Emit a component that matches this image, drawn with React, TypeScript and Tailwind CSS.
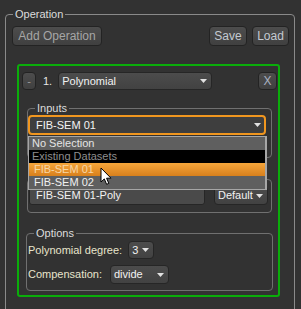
import React from "react";
import clsx from "clsx";

const font = { fontFamily: '"Liberation Sans", Arial, sans-serif' };

function GroupBox({
  title,
  className,
  children,
}: {
  title?: string;
  className?: string;
  children?: React.ReactNode;
}) {
  return (
    <fieldset className={clsx("rounded-[4px] border", className)}>
      <legend className="ml-[7px] h-[13px] px-[2px] text-[11px] leading-[13px] text-[#dcdcdc]">
        {title}
      </legend>
      {children}
    </fieldset>
  );
}

function Arrow() {
  return (
    <svg width="7" height="4" viewBox="0 0 7 4" className="shrink-0">
      <path d="M0 0 L7 0 L3.5 4 Z" fill="#e2e2e2" />
    </svg>
  );
}

function Combo({
  text,
  className,
}: {
  text: string;
  className?: string;
}) {
  return (
    <div
      className={clsx(
        "flex items-center justify-between rounded-[4px] border border-[#262626] bg-gradient-to-b from-[#4c4c4c] to-[#424242] pl-[3px] pr-[4px] text-[11px] text-[#f2f2f2]",
        className
      )}
    >
      <span>{text}</span>
      <Arrow />
    </div>
  );
}

function Button({
  text,
  className,
}: {
  text: string;
  className?: string;
}) {
  return (
    <div
      className={clsx(
        "flex items-center justify-center rounded-[4px] border border-[#232323] bg-gradient-to-b from-[#4d4d4d] to-[#404040]",
        className
      )}
    >
      {text}
    </div>
  );
}

export default function App() {
  return (
    <div
      className="relative h-[309px] w-[301px] overflow-hidden bg-[#323232] pt-[8px]"
      style={font}
    >
      {/* Operation */}
      <GroupBox title="Operation" className="ml-[5px] w-[290px] border-[#8a8a8a]">
        <div className="pb-[30px] pl-[6px] pr-[5px]">
          <div className="mt-[5px] flex items-center justify-between">
            <Button
              text="Add Operation"
              className="h-[20px] w-[90px] text-[12px] text-[#a6a6a6]"
            />
            <div className="flex gap-[5px]">
              <Button text="Save" className="h-[20px] w-[38px] text-[12px] text-[#c4cad2]" />
              <Button text="Load" className="h-[20px] w-[37px] text-[12px] text-[#c4cad2]" />
            </div>
          </div>

          {/* Operation 1 */}
          <div className="relative ml-[5px] mt-[18px] w-[263px] rounded-[3px] border-2 border-[#0aad0a] pb-[4px]">
            <div className="flex items-center pl-[3px] pr-[1px] pt-[6px]">
              <Button text="-" className="h-[18px] w-[14px] text-[11px] text-[#9a9a9a]" />
              <span className="ml-[7px] text-[11px] text-[#e6e6e6]">1.</span>
              <Combo text="Polynomial" className="ml-[6px] h-[18px] w-[154px]" />
              <Button
                text="X"
                className="ml-auto h-[18px] w-[19px] text-[12px] text-[#aab2c0]"
              />
            </div>

            <GroupBox title="Inputs" className="ml-[8px] mt-[12px] w-[245px] border-[#707070]">
              <div className="flex h-[20px] w-[238px] items-center justify-between rounded-[4px] border-2 border-[#f0961f] bg-[#3e3e3e] pl-[6px] pr-[3px] text-[11px] text-[#f4f4f4]">
                <span>FIB-SEM 01</span>
                <Arrow />
              </div>
              <div className="h-[22px]" />
            </GroupBox>

            {/* outputs box: its title sits under the open list */}
            <GroupBox className="ml-[8px] mt-[15px] w-[245px] border-[#707070]">
              <div className="flex items-center pb-[7px] pl-[1px]">
                <div className="flex h-[19px] w-[176px] items-center rounded-[3px] border border-[#262626] bg-[#4a4a4a] pl-[6px] text-[11px] text-[#f2f2f2]">
                  FIB-SEM 01-Poly
                </div>
                <Combo text="Default" className="ml-[9px] h-[19px] w-[54px] text-[#f0ecd8]" />
              </div>
            </GroupBox>

            <GroupBox title="Options" className="ml-[7px] mt-[14px] w-[247px] border-[#707070]">
              <div className="flex flex-col gap-[6px] pb-[6px] pl-[1px] pt-[1px] text-[11px] text-[#e8e4cc]">
                <div className="flex items-center">
                  <span>Polynomial degree:</span>
                  <Combo text="3" className="ml-[6px] h-[18px] w-[26px]" />
                </div>
                <div className="flex items-center">
                  <span>Compensation:</span>
                  <Combo text="divide" className="ml-[8px] h-[19px] w-[59px]" />
                </div>
              </div>
            </GroupBox>
          </div>
        </div>
      </GroupBox>

      {/* open dropdown list */}
      <div className="absolute left-[28px] top-[136px] w-[239px] border-b border-l border-r-2 border-t border-[#a6a6a6] text-[11px] leading-[13px]">
        <div className="h-[13px] overflow-hidden bg-[#5f5f5f] pl-[3px] text-[#e4e4e4]">No Selection</div>
        <div className="h-[13px] overflow-hidden bg-black pl-[3px] text-[#8e8e8e]">Existing Datasets</div>
        <div className="h-[13px] overflow-hidden bg-gradient-to-b from-[#f6a63a] to-[#d8801c] pl-[5px] text-[#f8d6a6]">
          FIB-SEM 01
        </div>
        <div className="h-[13px] overflow-hidden bg-[#5f5f5f] pl-[5px] text-[#f0f0f0]">FIB-SEM 02</div>
      </div>

      {/* mouse pointer */}
      <svg
        width="13"
        height="20"
        viewBox="0 0 13 20"
        className="absolute left-[100px] top-[167px]"
      >
        <path
          d="M1 1 L1 15 L4.3 11.9 L6.6 17.3 L8.8 16.4 L6.6 11.2 L11 11.2 Z"
          fill="#ffffff"
          stroke="#000000"
          strokeWidth="1"
          strokeLinejoin="miter"
        />
      </svg>
    </div>
  );
}
